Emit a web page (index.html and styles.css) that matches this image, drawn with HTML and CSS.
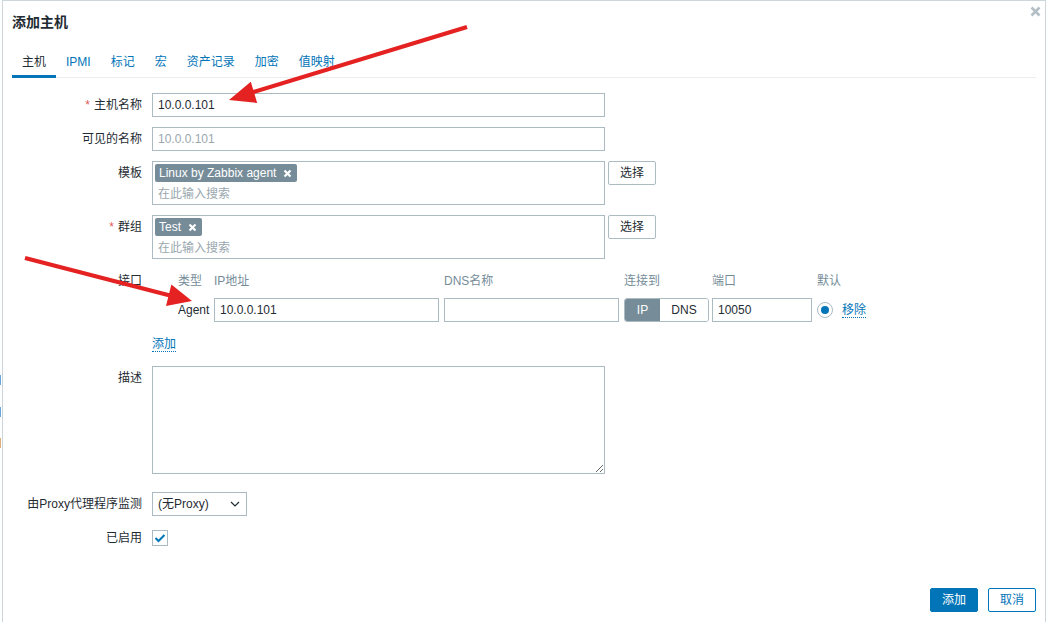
FILE: index.html
```html
<!DOCTYPE html>
<html lang="zh">
<head>
<meta charset="utf-8">
<title>添加主机</title>
<link rel="stylesheet" href="styles.css">
</head>
<body>
<div class="gutter"><span class="mark m1"></span><span class="mark m2"></span><span class="mark m3"></span></div>
<div class="dialog">
  <div class="dlg-head">
    <h4 class="dlg-title">添加主机</h4>
    <span class="close"><svg width="11" height="11" viewBox="0 0 11 11"><path d="M1.5 1.5 L9.5 9.5 M9.5 1.5 L1.5 9.5" stroke="#b3bfc5" stroke-width="2.6"/></svg></span>
  </div>
  <ul class="tabs">
    <li class="tab active">主机</li>
    <li class="tab">IPMI</li>
    <li class="tab">标记</li>
    <li class="tab">宏</li>
    <li class="tab">资产记录</li>
    <li class="tab">加密</li>
    <li class="tab">值映射</li>
  </ul>
  <div class="form">
    <div class="lbl"><span class="req">*</span>主机名称</div>
    <div class="fld"><div class="txt wide">10.0.0.101</div></div>

    <div class="lbl">可见的名称</div>
    <div class="fld"><div class="txt wide ph">10.0.0.101</div></div>

    <div class="lbl">模板</div>
    <div class="fld row">
      <div class="ms">
        <div class="ms-tags"><span class="tag">Linux by Zabbix agent<svg class="tag-x" width="9" height="9" viewBox="0 0 9 9"><path d="M1.5 1.5 L7.5 7.5 M7.5 1.5 L1.5 7.5" stroke="#fff" stroke-width="2.2"/></svg></span></div>
        <div class="ms-input">在此输入搜索</div>
      </div>
      <span class="btn-alt">选择</span>
    </div>

    <div class="lbl"><span class="req">*</span>群组</div>
    <div class="fld row">
      <div class="ms">
        <div class="ms-tags"><span class="tag">Test<svg class="tag-x" width="9" height="9" viewBox="0 0 9 9"><path d="M1.5 1.5 L7.5 7.5 M7.5 1.5 L1.5 7.5" stroke="#fff" stroke-width="2.2"/></svg></span></div>
        <div class="ms-input">在此输入搜索</div>
      </div>
      <span class="btn-alt">选择</span>
    </div>

    <div class="lbl lbl-if">接口</div>
    <div class="fld">
      <div class="iface">
        <span></span>
        <span class="ih">类型</span>
        <span class="ih">IP地址</span>
        <span class="ih">DNS名称</span>
        <span class="ih">连接到</span>
        <span class="ih">端口</span>
        <span class="ih">默认</span>
        <span></span>

        <span></span>
        <span class="itype">Agent</span>
        <span><span class="txt ip">10.0.0.101</span></span>
        <span><span class="txt dns"></span></span>
        <span class="toggle"><span class="tg on">IP</span><span class="tg">DNS</span></span>
        <span><span class="txt port">10050</span></span>
        <span class="radio"><span class="dot"></span></span>
        <span class="link">移除</span>
      </div>
      <div class="add-row"><span class="link">添加</span></div>
    </div>

    <div class="lbl">描述</div>
    <div class="fld"><textarea class="desc"></textarea></div>

    <div class="lbl">由Proxy代理程序监测</div>
    <div class="fld"><div class="sel">(无Proxy)<svg class="chev" width="10" height="6" viewBox="0 0 10 6"><path d="M1 1 L5 5 L9 1" fill="none" stroke="#1f2c33" stroke-width="1.2"/></svg></div></div>

    <div class="lbl">已启用</div>
    <div class="fld mid"><span class="chk"><svg width="12" height="10" viewBox="0 0 12 10"><path d="M1.5 5 L4.5 8 L10.5 2" fill="none" stroke="#0275b8" stroke-width="2"/></svg></span></div>
  </div>
  <div class="footer">
    <span class="btn">添加</span>
    <span class="btn btn-sec">取消</span>
  </div>
</div>
<svg class="arrows" width="1047" height="622" viewBox="0 0 1047 622">
  <line x1="467" y1="27" x2="252" y2="92.5" stroke="#e52222" stroke-width="4.2"/>
  <polygon points="229,100 257.2,103 250.8,81.8" fill="#e52222"/>
  <line x1="25" y1="258" x2="170" y2="295.5" stroke="#e52222" stroke-width="4.2"/>
  <polygon points="192,301 166,306 171.4,284.6" fill="#e52222"/>
</svg>
</body>
</html>
```

FILE: styles.css
```css
* { box-sizing: border-box; }
html, body { margin: 0; padding: 0; }
body {
  width: 1047px;
  height: 622px;
  overflow: hidden;
  background: #fff;
  position: relative;
  display: flex;
  font-family: "Liberation Sans", Arial, "Noto Sans CJK SC", sans-serif;
  font-size: 12px;
  color: #1f2c33;
}
.gutter { width: 2px; display: flex; flex-direction: column; }
.mark { display: block; width: 1px; }
.m1 { margin-top: 375px; height: 10px; background: #6aa6dc; }
.m2 { margin-top: 22px; height: 10px; background: #6aa6dc; }
.m3 { margin-top: 21px; height: 10px; background: #dcae7c; }

.dialog {
  width: 1044px;
  height: 622px;
  border: 1px solid #cdd6db;
  border-bottom: none;
  padding: 0 9px;
  display: flex;
  flex-direction: column;
}
.dlg-head { display: flex; justify-content: space-between; align-items: flex-start; }
.dlg-title {
  margin: 12px 0 14px;
  font-size: 14px;
  line-height: 18px;
  font-weight: bold;
  color: #1f2c33;
}
.close { display: block; margin: 5px -5px 0 0; width: 11px; height: 11px; }
.close svg { display: block; }

.tabs {
  list-style: none;
  margin: 0;
  padding: 0;
  display: flex;
  border-bottom: 1px solid #ebeef0;
}
.tab {
  padding: 9px 10px 5px;
  line-height: 16px;
  color: #0275b8;
  border-bottom: 3px solid transparent;
  margin-bottom: -1px;
}
.tab.active { color: #1f2c33; border-bottom-color: #0275b8; }

.form {
  padding-top: 15px;
  display: grid;
  grid-template-columns: 130px 1fr;
  column-gap: 10px;
  row-gap: 10px;
  align-items: start;
}
.lbl { text-align: right; line-height: 24px; white-space: nowrap; }
.lbl-if { line-height: 22px; padding-top: 1px; }
.req { color: #e45959; margin-right: 4px; }
.fld.row { display: flex; align-items: flex-start; gap: 3px; }
.fld.mid { height: 24px; display: flex; align-items: center; }

.txt {
  display: block;
  height: 24px;
  border: 1px solid #acbbc2;
  background: #fff;
  padding: 0 5px;
  line-height: 22px;
  color: #1f2c33;
  white-space: nowrap;
}
.wide { width: 453px; }
.ph { color: #9aa7ae; }

.ms {
  width: 453px;
  height: 44px;
  border: 1px solid #acbbc2;
  padding: 2px 2px 0;
}
.ms-tags { display: flex; height: 18px; }
.tag {
  display: flex;
  align-items: center;
  height: 18px;
  background: #768d99;
  color: #fff;
  padding: 0 5px 0 4px;
  border-radius: 2px;
  line-height: 18px;
}
.tag-x { margin-left: 7px; display: block; }
.ms-input { height: 22px; padding-top: 2px; line-height: 20px; padding-left: 3px; color: #9aa7ae; }

.btn-alt {
  display: block;
  width: 48px;
  height: 24px;
  border: 1px solid #acbbc2;
  border-radius: 2px;
  text-align: center;
  line-height: 22px;
  background: #fff;
  color: #1f2c33;
}

.iface {
  display: grid;
  grid-template-columns: 26px 36px 230px 180px 88px 105px 25px auto;
  grid-template-rows: 22px 24px;
  row-gap: 7px;
  align-items: center;
}
.ih { color: #768d99; line-height: 22px; padding-top: 1px; }
.itype { line-height: 24px; }
.ip { width: 225px; }
.dns { width: 175px; }
.port { width: 100px; }
.toggle {
  display: flex;
  width: 85px;
  height: 24px;
  border: 1px solid #acbbc2;
  border-radius: 3px;
  overflow: hidden;
}
.tg { flex: 1 1 auto; text-align: center; line-height: 22px; background: #fff; color: #1f2c33; }
.tg.on { flex: 0 0 35px; background: #768d99; color: #fff; }
.radio {
  width: 16px;
  height: 16px;
  border: 1px solid #acbbc2;
  border-radius: 50%;
  display: flex;
  align-items: center;
  justify-content: center;
}
.dot { width: 8px; height: 8px; border-radius: 50%; background: #0275b8; }
.link {
  color: #0275b8;
  justify-self: start;
  line-height: 14px;
  border-bottom: 1px dotted #0275b8;
}
.add-row { margin-top: 10px; height: 24px; display: flex; align-items: center; }

.desc {
  display: block;
  width: 453px;
  height: 108px;
  margin: 0 0 8px;
  border: 1px solid #acbbc2;
  padding: 4px 5px;
  font: inherit;
  resize: both;
}

.sel {
  width: 95px;
  height: 24px;
  border: 1px solid #acbbc2;
  padding: 0 5px;
  line-height: 22px;
  display: flex;
  justify-content: space-between;
  align-items: center;
}
.chev { display: block; margin-right: 1px; }

.chk {
  width: 16px;
  height: 16px;
  border: 1px solid #acbbc2;
  display: flex;
  align-items: center;
  justify-content: center;
  background: #fff;
}
.chk svg { display: block; }

.footer {
  margin-top: auto;
  padding-bottom: 10px;
  display: flex;
  justify-content: flex-end;
  gap: 10px;
}
.btn {
  display: block;
  width: 48px;
  height: 24px;
  border: 1px solid #0275b8;
  border-radius: 2px;
  background: #0275b8;
  color: #fff;
  text-align: center;
  line-height: 22px;
}
.btn-sec { background: #fff; color: #0275b8; }

.arrows { position: absolute; left: 0; top: 0; pointer-events: none; }
```
